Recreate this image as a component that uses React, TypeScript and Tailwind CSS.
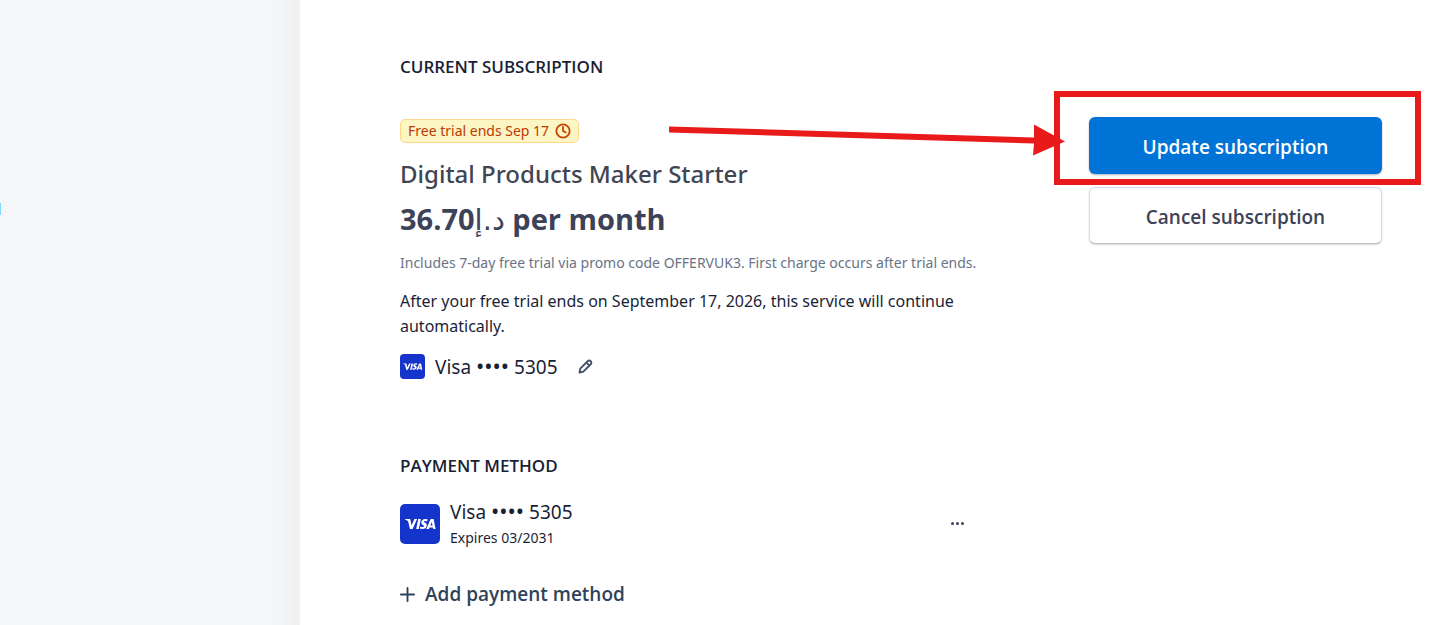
import React from 'react';
import { Clock, Plus } from 'lucide-react';
import clsx from 'clsx';

interface CardRowProps {
  brand: string;
  last4: string;
}

const CARD: CardRowProps = { brand: 'Visa', last4: '5305' };

const VisaLogo: React.FC<{ className?: string }> = ({ className }) => (
  <svg viewBox="0 0 40 40" className={clsx('shrink-0', className)} role="img" aria-label="Visa">
    <rect width="40" height="40" fill="#1434cb" />
    <g fill="#fff">
      <path d="M5 15h4.2c.8 0 1.200.4 1.300 1l1.100 5.400 2.800-6.400h2.700L12.600 25H9.900L8.100 17.200C7.300 16.500 6.200 16 5 15.600Z" />
      <path d="M18.200 15h2.600l-2 10h-2.600Z" />
      <path d="M27.600 15.400l-.5 2c-1.600-.8-3.200-.6-3.200.2 0 1 2.900 1.200 2.900 3.700 0 3.600-4.300 4.500-7 3.300l.5-2.100c1.700.9 3.700.8 3.700-.4 0-1.100-2.800-1.100-2.800-3.600 0-3.200 3.700-4.300 6.400-3.100Z" />
      <path fillRule="evenodd" d="M31.300 15h2.300l2 10h-2.400l-.3-1.500h-3.300l-.6 1.500h-2.700l4-9.200c.2-.5.500-.8 1-.8Zm.5 3-1.400 3.500h2.100Z" />
    </g>
  </svg>
);

const PencilIcon = () => (
  <svg width="15" height="15" viewBox="0 0 15 15" fill="none" stroke="#414f66" strokeWidth="1.900" strokeLinejoin="round">
    <path d="M1.500 13.500 2.300 9.600 9.700 2.200a2.100 2.100 0 0 1 3 0 2.100 2.100 0 0 1 0 3L5.300 12.600Z" />
    <path d="M8.400 3.700l2.900 2.900" />
  </svg>
);

const SectionTitle: React.FC<{ children: React.ReactNode }> = ({ children }) => (
  <h2 className="font-['Open_Sans'] text-[17px] leading-6 font-semibold text-[#1a1f36] uppercase">{children}</h2>
);

const CardNumber: React.FC<CardRowProps> = ({ brand, last4 }) => (
  <span className="text-[19px] leading-6">
    {brand} <span className="text-[22px] leading-none">••••</span> {last4}
  </span>
);

/* Arrow and frame drawn around the primary action */
const Callout = () => (
  <>
    <svg
      width="396"
      height="34"
      viewBox="0 0 396 34"
      className="pointer-events-none absolute top-[7px] -left-[420px] z-10 max-w-none"
      aria-hidden="true"
    >
      <path d="M0 2.500 365 13.500V.500L396 17.500 364 31.500 365 19.500 0 8.500Z" fill="#e81a1a" />
    </svg>
    <div className="pointer-events-none absolute -top-[26px] -right-[39px] -bottom-[11px] -left-[35px] border-6 border-[#e81a1a]" />
  </>
);

const App: React.FC = () => {
  return (
    <div className="flex min-h-screen overflow-x-hidden bg-white font-['Noto_Sans','DejaVu_Sans',sans-serif] text-[#1a1f36]">
      <aside className="relative w-[300px] shrink-0 bg-linear-to-r from-[#f5f6f8] from-92% to-[#eef0f2]">
        <span className="absolute top-[203px] left-0 h-3 w-px bg-[#80d8fc]" />
      </aside>

      <main className="min-w-0 flex-1 pt-[55px] pr-[70px] pl-[100px]">
        <section className="flex justify-between gap-12">
          <div className="max-w-[590px] min-w-0 flex-1">
            <SectionTitle>Current subscription</SectionTitle>

            <div className="mt-10 flex h-6 w-fit items-center gap-[6px] rounded-[5px] border border-[#fcd98b] bg-[#fcf5c4] px-[7px] text-sm text-[#bb3a06]">
              Free trial ends Sep 17
              <Clock size={16} strokeWidth={2.8} className="text-[#c84801]" />
            </div>

            <h1 className="mt-[15px] text-2xl leading-8 font-medium text-[#414552]">Digital Products Maker Starter</h1>
            <p className="mt-[9px] font-['Open_Sans'] text-[29px] leading-10 font-bold text-[#3c4257]">
              <bdi>36.70</bdi>
              <bdi className="font-['DejaVu_Sans'] font-normal">د.إ</bdi> per month
            </p>
            <p className="mt-[13px] text-sm leading-5 text-[#697386]">
              Includes 7-day free trial via promo code OFFERVUK3. First charge occurs after trial ends.
            </p>
            <p className="mt-4 text-base leading-[25px]">
              After your free trial ends on September 17, 2026, this service will continue automatically.
            </p>

            <div className="mt-[15px] flex items-center gap-[10px]">
              <VisaLogo className="size-[25px] rounded-[4px]" />
              <CardNumber {...CARD} />
              <button type="button" aria-label="Edit card" className="ml-[10px]">
                <PencilIcon />
              </button>
            </div>
          </div>

          <div className="flex w-[293px] shrink-0 flex-col gap-[13px] pt-[62px]">
            <div className="relative">
              <button
                type="button"
                className="h-[57px] w-full rounded-md bg-[#0074d6] pt-[3px] font-['Open_Sans'] text-[19px] font-semibold text-white shadow-[0_1px_2px_rgba(60,66,87,0.4)]"
              >
                Update subscription
              </button>
              <Callout />
            </div>
            <button
              type="button"
              className="h-[57px] w-full rounded-md border border-[#d8dade] border-b-[#bfc1c5] bg-white pt-[3px] font-['Open_Sans'] text-[19px] font-semibold text-[#3c4257] shadow-[0_1px_2px_rgba(0,0,0,0.16)]"
            >
              Cancel subscription
            </button>
          </div>
        </section>

        <section className="mt-[75px] max-w-[590px]">
          <SectionTitle>Payment method</SectionTitle>

          <div className="mt-[21px] flex items-center gap-[10px]">
            <VisaLogo className="size-10 rounded-[5px]" />
            <div className="flex flex-col gap-1">
              <CardNumber {...CARD} />
              <span className="text-sm leading-5">Expires 03/2031</span>
            </div>
            <button type="button" aria-label="More options" className="mr-[25px] ml-auto">
              <svg width="15" height="5" viewBox="0 0 15 5" fill="#3c4257">
                <circle cx="2.500" cy="2.500" r="1.500" />
                <circle cx="7.500" cy="2.500" r="1.500" />
                <circle cx="12.500" cy="2.500" r="1.500" />
              </svg>
            </button>
          </div>

          <button
            type="button"
            className="mt-[34px] flex items-center gap-[10px] font-['Open_Sans'] text-[19px] leading-6 font-semibold text-[#2f4358]"
          >
            <Plus size={15} viewBox="4 4 16 16" strokeWidth={2} />
            Add payment method
          </button>
        </section>
      </main>
    </div>
  );
};

export default App;
